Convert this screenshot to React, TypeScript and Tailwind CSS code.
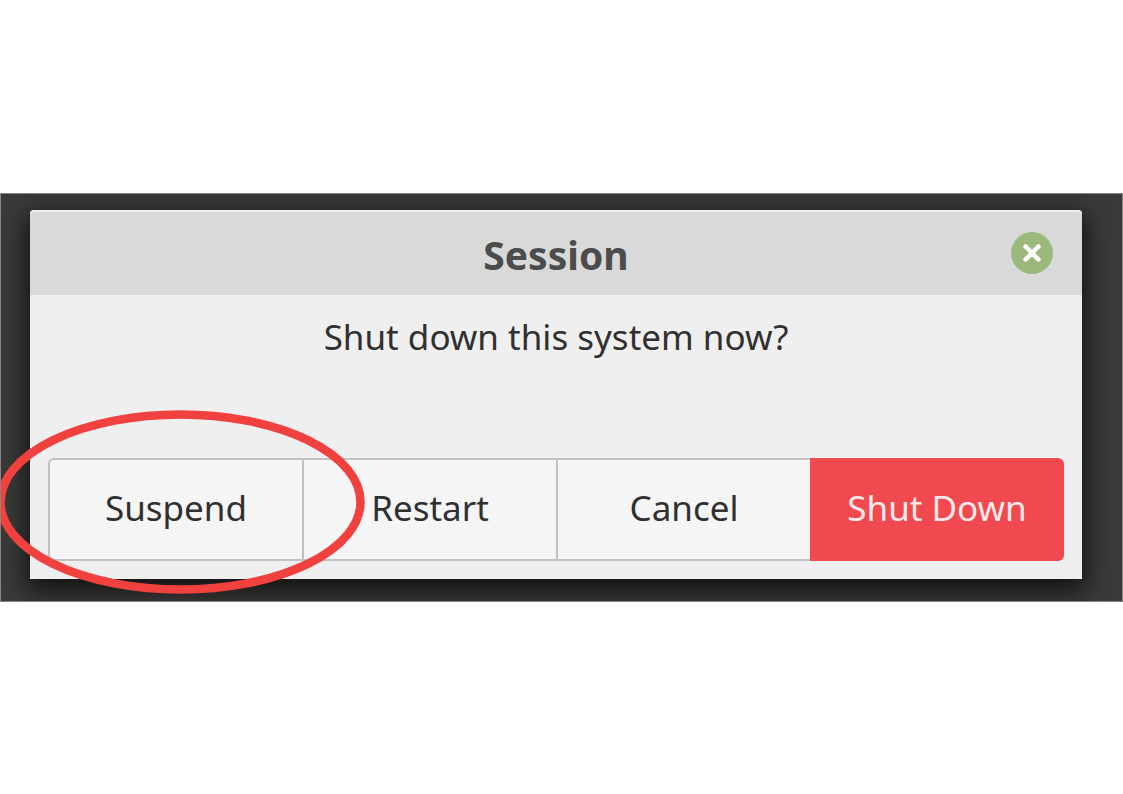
import React from 'react';

interface SessionButtonProps {
  label: string;
  className: string;
  onClick?: () => void;
}

const SessionButton: React.FC<SessionButtonProps> = ({ label, className, onClick }) => (
  <button type="button" onClick={onClick} className={`w-full h-full pt-[23px] pb-[26px] text-[35px] leading-[50px] whitespace-nowrap cursor-pointer ${className}`}>
    {label}
  </button>
);

const plain = 'bg-[#f5f5f5] text-[#303030] border-y-2 border-l-2 border-[#c2c2c2]';

const Marker: React.FC = () => (
  <svg className="absolute -left-[51px] -top-[48px] w-[368px] h-[184px] max-w-none pointer-events-none" viewBox="0 0 368 184" fill="none" aria-hidden="true">
    <ellipse cx="183.5" cy="92" rx="180" ry="87.5" stroke="#f0413f" strokeWidth="8.5" />
  </svg>
);

const SessionDialog: React.FC = () => (
  <section role="dialog" aria-labelledby="session-title" className="bg-[#efefef] rounded-t shadow-[0_8px_24px_4px_rgba(0,0,0,0.7)]">
    <header className="grid grid-cols-[1fr_auto_1fr] items-center px-[29px] pt-[17px] pb-[18px] rounded-t bg-[#d9d9d9] border-t-2 border-[#eeeeee]">
      <h1 id="session-title" className="col-start-2 pt-1 text-[39px] leading-[44px] font-bold text-[#4c4c4c]">Session</h1>
      <button type="button" aria-label="Close" className="justify-self-end flex items-center justify-center w-[42px] h-[42px] rounded-full bg-[#9bb97d] cursor-pointer">
        <svg className="w-[42px] h-[42px]" viewBox="0 0 42 42" fill="none" stroke="#ffffff" strokeWidth="4.5" strokeLinecap="round">
          <path d="M14.5 14.5L27.5 27.5M27.5 14.5L14.5 27.5" />
        </svg>
      </button>
    </header>
    <p className="px-6 pt-[17px] pb-[96px] text-center text-[35px] leading-[50px] text-[#303030]">Shut down this system now?</p>
    <div className="grid grid-cols-4 px-[18px] pb-[18px]">
      <div className="relative">
        <SessionButton label="Suspend" className={`${plain} rounded-l-md`} />
        <Marker />
      </div>
      <SessionButton label="Restart" className={plain} />
      <SessionButton label="Cancel" className={plain} />
      <SessionButton label="Shut Down" className="bg-[#f04a50] text-[#ffe9ea] border-y-2 border-[#f04a50] rounded-r-md" />
    </div>
  </section>
);

const App: React.FC = () => (
  <main className="min-h-screen flex flex-col justify-center bg-white font-['Noto_Sans',sans-serif]">
    <div className="overflow-hidden pt-4 pr-10 pb-[22px] pl-[29px] bg-[#3a3a39] border border-[#858585]">
      <SessionDialog />
    </div>
  </main>
);

export default App;
